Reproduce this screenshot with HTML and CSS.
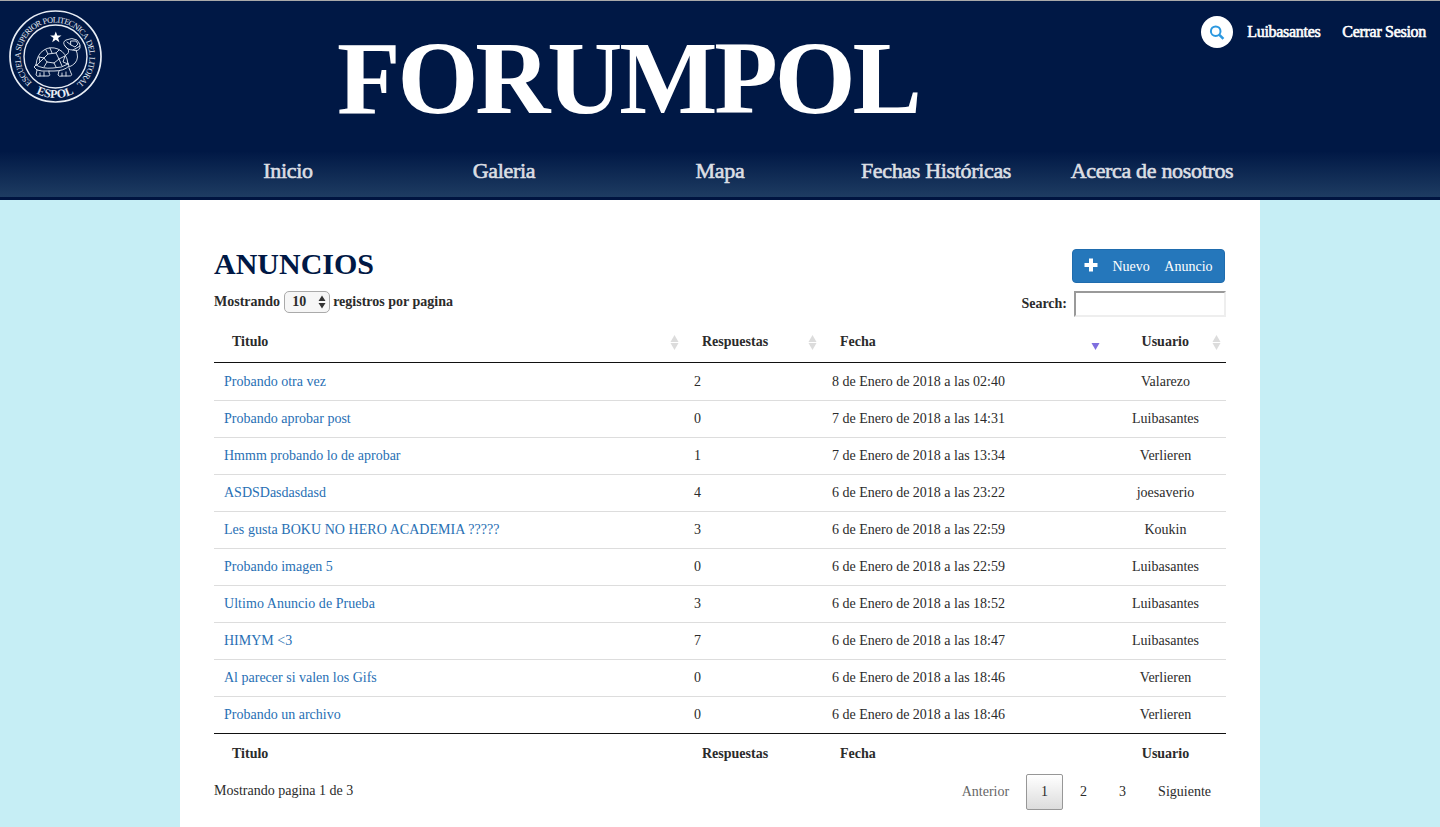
FILE: index.html
```
<!DOCTYPE html>
<html lang="es">
<head>
<meta charset="utf-8">
<title>Forumpol</title>
<link rel="stylesheet" href="styles.css">
</head>
<body>
<header class="header">
  <div class="topbar">
    <svg class="logo" viewBox="0 0 94 94" width="94" height="94" fill="none" stroke="#e8edf5">
      <defs>
        <path id="ring" d="M23.900 72.600 A34.500 34.500 0 1 1 69.700 72.900"/>
        <path id="base" d="M20 77.800 A41 41 0 0 0 74 77.800"/>
      </defs>
      <circle cx="47.500" cy="46.500" r="45.500" stroke-width="1.700"/>
      <circle cx="47.500" cy="46.500" r="31.500" stroke-width="1.400"/>
      <path d="M47.800 21.500l1.500 4h4.200l-3.400 2.600 1.300 4.200-3.600-2.500-3.600 2.500 1.300-4.200-3.400-2.600h4.200z" fill="#fff" stroke="none"/>
      <g stroke-width=".9" stroke-linejoin="round" stroke-linecap="round">
        <path d="M28 55Q29 44 36 40Q42 36 50 39Q59 43 60 54Q54 58 45 58Q34 59 28 55Z"/>
        <path d="M38 40L40 44L36 48L31 47M40 44L48 43L51 40M48 43L51 49L46 53L39 52L36 48M51 49L57 46M46 53L48 57M39 52L36 57M31 47L32 52L29 55M36 48L32 52M51 49L54 56M57 46L55 52L60 54M42 38L44 43"/>
        <path d="M28 55L26 57Q28 61 34 61L46 61Q56 61 61 56L60 53"/>
        <path d="M29 60L28 65Q29 67 32 66L40 66Q43 66 41 63L41 61M51 61L50 65Q51 67 54 66L61 66Q65 66 63 63L61 58M32 63V66M36 62V66M54 63V66M58 62V66"/>
        <path d="M61 57Q69 54 69.500 47Q69.500 43 68 40M58 45Q62 43 60 39L57 36Q54 32 58 30Q64 27 69 30Q73 34 72 38Q70 42 65 40Q59 40 57 36"/>
        <path d="M63 31L68 31L70 34L67 37L63 35ZM72 36L65 40M59 32L63 35"/>
      </g>
      <g fill="#e8edf5" stroke="none">
        <text class="ring-text"><textPath href="#ring">ESCUELA</textPath></text>
        <text class="ring-text"><textPath href="#ring" startOffset="34.500">SUPERIOR</textPath></text>
        <text class="ring-text"><textPath href="#ring" startOffset="71.400">POLITECNICA</textPath></text>
        <text class="ring-text"><textPath href="#ring" startOffset="120.800">DEL</textPath></text>
        <text class="ring-text"><textPath href="#ring" startOffset="136.900">LITORAL</textPath></text>
        <text class="base-text" text-anchor="middle"><textPath href="#base" startOffset="50%">ESPOL</textPath></text>
      </g>
    </svg>
    <h1 class="brand">FORUMPOL</h1>
    <div class="user">
      <a class="search-link"><svg viewBox="0 0 16 16" width="16" height="16" fill="none" stroke="#2b98e0"><circle cx="6.700" cy="7.200" r="4.800" stroke-width="2"/><path d="M10.400 10.900l4 4" stroke-width="2.600"/></svg></a>
      <a class="user-name">Luibasantes</a>
      <a class="logout">Cerrar Sesion</a>
    </div>
  </div>
  <nav class="nav"><a>Inicio</a><a>Galeria</a><a>Mapa</a><a>Fechas Históricas</a><a>Acerca de nosotros</a></nav>
</header>
<main class="content">
  <div class="heading">
    <h2>ANUNCIOS</h2>
    <button class="new"><svg width="14" height="14" viewBox="0 0 14 14"><path d="M5 .5h4V5h4.500v4H9v4.500H5V9H.5V5H5z" fill="#fff"/></svg><span>Nuevo</span><span>Anuncio</span></button>
  </div>
  <div class="controls">
    <div class="length">Mostrando <span class="select">10<svg width="8" height="14" viewBox="0 0 8 14"><path d="M4 .5l3.500 5.500h-7zM4 13.500L.5 8h7z" fill="#333"/></svg></span> registros por pagina</div>
    <label class="filter">Search:<input type="text"></label>
  </div>
  <table class="posts">
    <colgroup><col class="c1"><col class="c2"><col class="c3"><col class="c4"></colgroup>
    <thead><tr><th><div class="th">Titulo<i class="sort"></i></div></th><th><div class="th">Respuestas<i class="sort"></i></div></th><th><div class="th">Fecha<i class="sort desc"></i></div></th><th class="mid"><div class="th">Usuario<i class="sort"></i></div></th></tr></thead>
    <tbody>
      <tr><td><a>Probando otra vez</a></td><td>2</td><td>8 de Enero de 2018 a las 02:40</td><td>Valarezo</td></tr>
      <tr><td><a>Probando aprobar post</a></td><td>0</td><td>7 de Enero de 2018 a las 14:31</td><td>Luibasantes</td></tr>
      <tr><td><a>Hmmm probando lo de aprobar</a></td><td>1</td><td>7 de Enero de 2018 a las 13:34</td><td>Verlieren</td></tr>
      <tr><td><a>ASDSDasdasdasd</a></td><td>4</td><td>6 de Enero de 2018 a las 23:22</td><td>joesaverio</td></tr>
      <tr><td><a class="loose">Les gusta BOKU NO HERO ACADEMIA ?????</a></td><td>3</td><td>6 de Enero de 2018 a las 22:59</td><td>Koukin</td></tr>
      <tr><td><a>Probando imagen 5</a></td><td>0</td><td>6 de Enero de 2018 a las 22:59</td><td>Luibasantes</td></tr>
      <tr><td><a class="loose">Ultimo Anuncio de Prueba</a></td><td>3</td><td>6 de Enero de 2018 a las 18:52</td><td>Luibasantes</td></tr>
      <tr><td><a>HIMYM &lt;3</a></td><td>7</td><td>6 de Enero de 2018 a las 18:47</td><td>Luibasantes</td></tr>
      <tr><td><a>Al parecer si valen los Gifs</a></td><td>0</td><td>6 de Enero de 2018 a las 18:46</td><td>Verlieren</td></tr>
      <tr><td><a>Probando un archivo</a></td><td>0</td><td>6 de Enero de 2018 a las 18:46</td><td>Verlieren</td></tr>
    </tbody>
    <tfoot><tr><th>Titulo</th><th>Respuestas</th><th>Fecha</th><th class="mid">Usuario</th></tr></tfoot>
  </table>
  <div class="footer">
    <div class="info">Mostrando pagina 1 de 3</div>
    <div class="pages"><a class="off">Anterior</a><a class="current">1</a><a>2</a><a>3</a><a>Siguiente</a></div>
  </div>
</main>
</body>
</html>
```
FILE: styles.css
```
* { box-sizing: border-box; }
body { margin: 0; height: 827px; overflow: hidden; background: #c6eef5; color: #2b2b2b; font: 14px/20px "Liberation Serif", serif; }
.header { height: 200px; background: #001845; border-top: 1px solid #a9a9a9; border-bottom: 3px solid #001440; }
.topbar { display: flex; height: 145px; padding-left: 8px; }
.logo { margin-top: 9px; flex: none; }
.ring-text { font-size: 8.3px; letter-spacing: -.65px; }
.base-text { font-size: 12px; font-weight: bold; }
.brand { margin: 19px 0 0 235px; width: 600px; flex: none; font-size: 104px; line-height: 115px; letter-spacing: -3.1px; color: #fff; }
.user { display: flex; margin-left: auto; margin-top: 15px; padding-right: 14px; height: 32px; align-items: center; color: #fff; font-size: 16px; letter-spacing: -.3px; -webkit-text-stroke: .6px #fff; }
.search-link { display: flex; align-items: center; justify-content: center; width: 32px; height: 32px; border-radius: 50%; background: #fff; margin-right: 14px; }
.user-name { margin-right: 22px; }
.nav { display: grid; grid-template-columns: repeat(5, 216px); justify-content: center; height: 51px; padding-top: 12px; background: linear-gradient(#001845, #001845 10%, #1e3c62); color: #dcdfe4; font-size: 22px; line-height: 26px; letter-spacing: -.33px; text-align: center; -webkit-text-stroke: .6px #dcdfe4; }
.content { width: 1080px; height: 627px; margin: 0 auto; padding: 46px 34px 0; background: #fff; }
.heading { display: flex; justify-content: space-between; height: 41px; padding-right: 1px; }
.heading h2 { margin: 0; color: #001845; font-size: 30px; line-height: 36px; }
.new { display: flex; align-items: center; width: 153px; height: 34px; margin-top: 3px; padding: 0 0 0 11px; border: 1px solid #1f6cae; border-radius: 4px; background: #2577bb; color: #fff; font: 14px/20px "Liberation Serif", serif; }
.new svg { flex: none; margin-bottom: 2px; }
.new span { margin-left: 14.5px; padding-top: 1px; }
.controls { display: flex; justify-content: space-between; height: 34px; font-weight: bold; }
.length { display: flex; height: 22px; margin-top: 4px; align-items: center; gap: 4px; }
.select { display: flex; align-items: center; justify-content: space-between; width: 46px; height: 22px; margin-right: -1px; padding: 0 3px 0 7px; border: 1px solid #aaa; border-radius: 5px; background: #f6f6f6; }
.filter { display: flex; align-items: center; gap: 7px; height: 26px; margin-top: 4px; }
.filter input { width: 152px; height: 26px; border: 2px inset #eee; background: #fff; }
.posts { table-layout: fixed; width: 1012px; border-collapse: separate; border-spacing: 0; }
.c1 { width: 470px; }
.c2 { width: 138px; }
.c3 { width: 283px; }
.c4 { width: 121px; }
.posts th { padding: 10px 18px; text-align: left; }
.posts thead th { height: 42px; padding: 0 5px 0 18px; border-bottom: 1px solid #111; }
.posts .mid { text-align: center; }
.th { display: flex; align-items: center; justify-content: space-between; }
.mid .th { justify-content: flex-end; gap: 22px; }
.sort { display: grid; gap: 1px; width: 10px; height: 15px; transform: translate(.5px, 1px); }
.sort::before, .sort::after { content: ""; border: 4px solid transparent; border-top: 0; border-bottom: 7px solid #dcdcdc; width: 0; height: 0; margin: 0 auto; }
.sort::after { border-bottom: 0; border-top: 7px solid #dcdcdc; }
.desc::before { visibility: hidden; }
.desc::after { border-top-color: #7f6fdf; }
.posts td { height: 37px; padding: 0 10px; border-top: 1px solid #ddd; }
.posts tbody tr:first-child td { border-top: 0; }
.posts td:last-child { text-align: center; }
.posts td a { color: #286fb4; }
.posts td .loose { letter-spacing: .05px; }
.posts tfoot th { border-top: 1px solid #111; padding-bottom: 8px; }
.footer { display: flex; justify-content: space-between; }
.info { padding-top: 9px; }
.pages { display: flex; gap: 2px; padding-top: 2px; }
.pages a { padding: 7px 14px; height: 36px; border: 1px solid transparent; border-radius: 2px; }
.pages .off { color: #666; }
.pages .current { border-color: #979797; background: linear-gradient(#fff, #dcdcdc); }
```
